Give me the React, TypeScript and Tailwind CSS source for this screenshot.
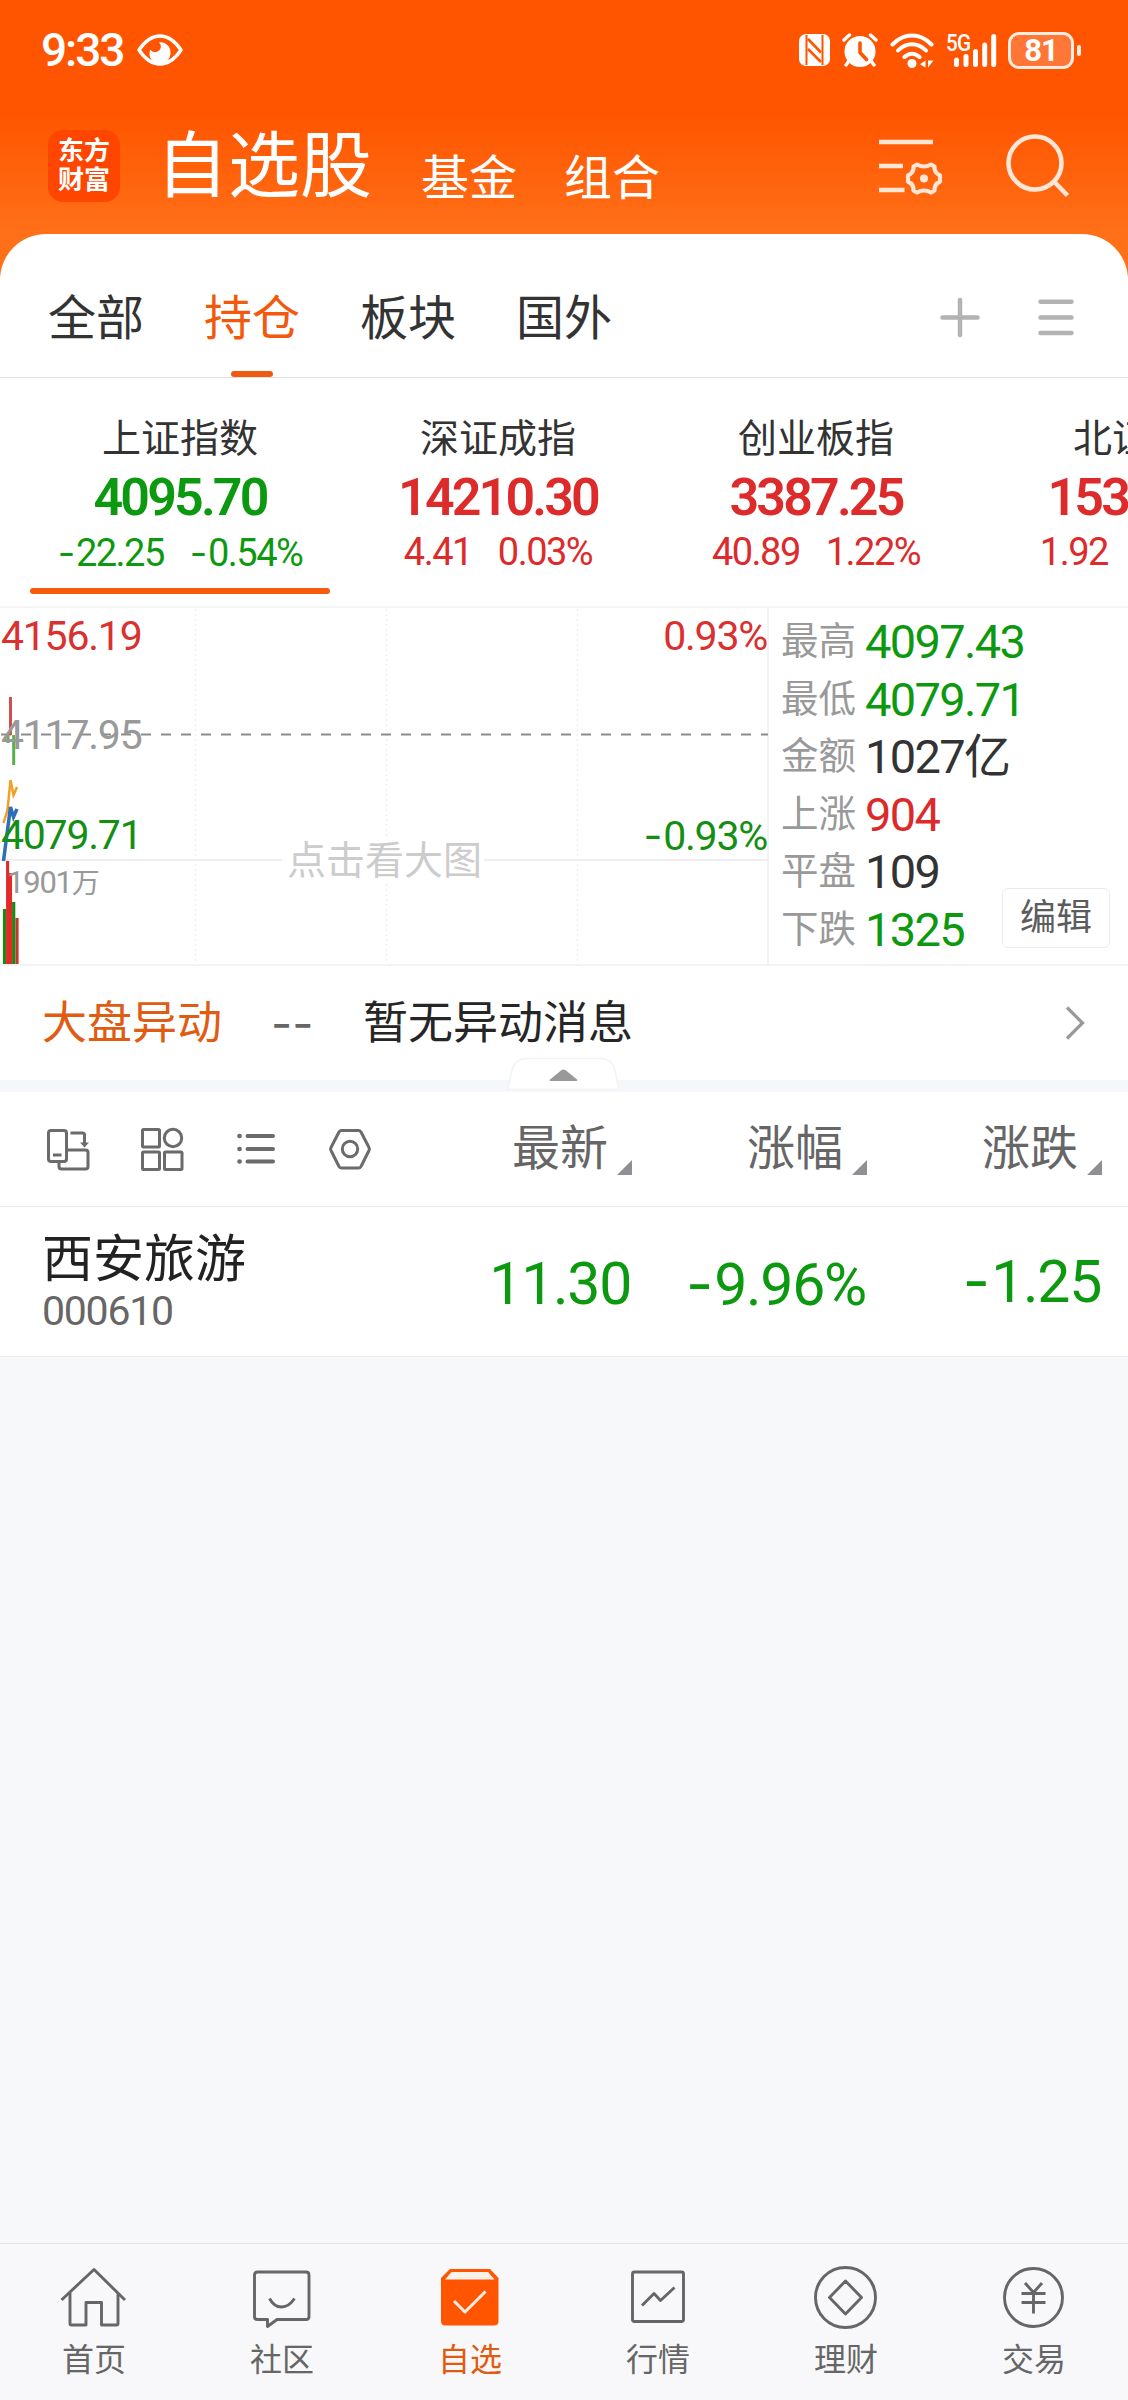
import type { ReactNode } from "react";

const topTabs = ["基金", "组合"];
const groups = ["全部", "持仓", "板块", "国外"];

const indices = [
    { name: "上证指数", value: "4095.70", change: "-22.25", percent: "-0.54%", down: true },
    { name: "深证成指", value: "14210.30", change: "4.41", percent: "0.03%", down: false },
    { name: "创业板指", value: "3387.25", change: "40.89", percent: "1.22%", down: false },
    { name: "北证50", value: "1530.12", change: "1.92", percent: "0.13%", down: false }
];

const stats = [
    { label: "最高", value: "4097.43", color: "text-[#0d990f]" },
    { label: "最低", value: "4079.71", color: "text-[#0d990f]" },
    { label: "金额", value: "1027亿", color: "text-[#333333]" },
    { label: "上涨", value: "904", color: "text-[#dc2a2a]" },
    { label: "平盘", value: "109", color: "text-[#333333]" },
    { label: "下跌", value: "1325", color: "text-[#0d990f]" }
];

const columns = ["最新", "涨幅", "涨跌"];

// Roboto's hyphen is too short for a minus sign
function Num({ children }: { children: string }) {
    if (!children.startsWith("-")) return <>{children}</>;
    return (
        <>
            <span className="font-[Inter] tracking-[0.02em]">-</span>
            {children.slice(1)}
        </>
    );
}

function StatusBar() {
    return (
        <div className="flex h-[100px] items-center pl-[41px] text-white">
            <span className="w-[96px] text-[46px] leading-none font-medium tracking-[-0.045em]">9:33</span>
            <svg width="46" height="32" viewBox="0 0 46 32" fill="none">
                <path d="M2 16C8 7 15 2 23 2s15 5 21 14c-6 9-13 14-21 14S8 25 2 16Z" stroke="#fff" strokeWidth="3.4" strokeLinejoin="round" />
                <path d="M22 8.5a10 10 0 0 1 11.5 10C33.500 26 28 30 23 30s-10.500-4-10.500-10c0-2 .5-3.500 1-4.500 2 3.500 6 3 8.500 1s2.500-5.500 0-8Z" fill="#fff" />
            </svg>
            <div className="ml-[616px] flex items-center">
                <svg width="31" height="32" viewBox="0 0 31 32">
                    <rect width="31" height="32" rx="7" fill="#fff" />
                    <path d="M7.500 1V31M23.500 1V31" stroke="#ff5500" strokeWidth="2" fill="none" />
                    <path d="M9 5L22 18.500M9 15L22 28" stroke="#ff5500" strokeWidth="2.600" />
                </svg>
                <svg className="ml-3" width="36" height="34" viewBox="0 0 36 34" fill="none" strokeLinecap="round">
                    <circle cx="18" cy="18.500" r="15.500" fill="#fff" />
                    <path d="M2 7L7.500 2M34 7l-5.500-5M7 28l-3 4M29 28l3 4" stroke="#fff" strokeWidth="3.400" />
                    <path d="M18 10v9.500l6.500 7" stroke="#ff5500" strokeWidth="3.600" strokeLinejoin="round" />
                </svg>
                <svg className="ml-3" width="46" height="35" viewBox="0 0 46 35" fill="none" stroke="#fff" strokeWidth="4" strokeLinecap="round">
                    <path d="M2.500 11.500C14-.5 30-.5 41.500 11.500M8 17.500c8-8.500 20-8.500 28 0M14.500 24c4.500-4.500 10.500-4.500 15 0" />
                    <circle cx="22" cy="30.500" r="4.500" fill="#fff" stroke="none" />
                    <path d="M35.500 27.500v7l-5.500-3.200ZM38 27.500v7l5.500-7Z" fill="#fff" stroke="none" />
                </svg>
                <div className="relative ml-[10px] h-[35px] w-[51px]">
                    <span className="absolute -top-px left-0 origin-left scale-x-90 text-[23px] leading-none font-medium tracking-[-0.04em]">5G</span>
                    <svg width="51" height="35" viewBox="0 0 51 35" stroke="#fff" strokeWidth="5" strokeLinecap="round">
                        <path d="M10.500 27v4.500M20 23.500v8M29.500 18.500v13M38.700 12v19.500M47.700 3.500v28" />
                    </svg>
                </div>
                <div className="ml-[11px] flex h-[37px] w-[66px] items-center justify-center rounded-[11px] border-[3px] border-[#ffede2] bg-[#ff7636] text-[31px] leading-none font-bold tracking-[-0.03em]">
                    81
                </div>
                <div className="ml-[3px] h-[11px] w-[4px] rounded-sm bg-[#ffede2]" />
            </div>
        </div>
    );
}

function Header() {
    return (
        <header className="flex h-[134px] text-white">
            <div className="mt-[30px] ml-[48px] grid size-[72px] place-content-center rounded-[15px] bg-[#ff4600] text-[26px] leading-[29px] font-bold">
                <div>东方</div>
                <div>财富</div>
            </div>
            <h1 className="mt-[31px] ml-[36px] text-[72px] leading-none">自选股</h1>
            <nav className="mt-[55px] ml-[49px] flex gap-[47px] text-[48px] leading-none">
                {topTabs.map(t => <span key={t}>{t}</span>)}
            </nav>
            <svg className="mt-[36px] ml-[219px]" width="66" height="62" viewBox="0 0 66 62" fill="none" stroke="#ffe6d6" strokeWidth="4.500">
                <path d="M0 6h54M0 30h24M0 54h25.500" />
                <path
                    d="M38 28.500Q45 32.500 52 28.500L55.500 30.500Q55 36.500 61 39.500V45.500Q55 48.500 55.500 54.500L52 56.500Q45 52.500 38 56.500L34.500 54.500Q35 48.500 29 45.500V39.500Q35 36.500 34.500 30.500Z"
                    strokeLinejoin="round"
                    strokeWidth="4.200"
                />
                <circle cx="45" cy="42.500" r="4" fill="#ffe6d6" stroke="none" />
            </svg>
            <svg className="mt-[34px] ml-[60px]" width="66" height="66" viewBox="0 0 66 66" fill="none" stroke="#ffe6d6" strokeWidth="4.600">
                <circle cx="30" cy="29" r="26.500" />
                <path d="M49 47.500L62.500 61.500" />
            </svg>
        </header>
    );
}

function GroupTabs() {
    return (
        <div className="flex h-[144px] border-b border-[#e3e3e3] pl-[48px]">
            <div className="flex gap-[60px] text-[48px] leading-none text-[#333333]">
                {groups.map(g => (
                    <div key={g} className={g === "持仓" ? "flex flex-col items-center text-[#f2590c]" : "flex flex-col items-center"}>
                        <span className="mt-[61px]">{g}</span>
                        {g === "持仓" && <i className="mt-[28px] h-[6px] w-[42px] rounded-full bg-[#ee5a10]" />}
                    </div>
                ))}
            </div>
            <svg className="mt-[62px] ml-[328px]" width="40" height="44" viewBox="0 0 40 44" stroke="#b3b3b3" strokeWidth="4.500" strokeLinecap="round">
                <path d="M2.500 21.500h35M20 4v35" />
            </svg>
            <svg className="mt-[62px] ml-[58px]" width="36" height="44" viewBox="0 0 36 44" stroke="#b3b3b3" strokeWidth="4.500" strokeLinecap="round">
                <path d="M2.500 5.800h31M2.500 21.500h31M2.500 37h31" />
            </svg>
        </div>
    );
}

function IndexStrip() {
    return (
        <div className="flex h-[230px] overflow-hidden border-b-2 border-[#f5f5f5] pl-[21px]">
            {indices.map((item, i) => (
                <div key={item.name} className="flex w-[318px] shrink-0 flex-col items-center leading-none">
                    <div className="mt-[42px] text-[39px] text-[#333333]">{item.name}</div>
                    <div className={item.down ? "text-[#0d990f]" : "text-[#dd2a2a]"}>
                        <div className="mt-[13px] text-center text-[52px] font-semibold tracking-[-0.055em]">{item.value}</div>
                        <div className="mt-[9px] flex justify-center gap-[26px] text-[38px] tracking-[-0.04em]">
                            <span><Num>{item.change}</Num></span>
                            <span><Num>{item.percent}</Num></span>
                        </div>
                    </div>
                    {i === 0 && <div className="mt-[16px] h-[6px] w-[300px] rounded-full bg-[#f65a0b]" />}
                </div>
            ))}
        </div>
    );
}

function MinuteChart() {
    return (
        <div className="relative h-[356px] w-[769px] border-r-2 border-[#f3f3f3]">
            <svg className="absolute inset-0" width="769" height="356" viewBox="0 608 769 356" fill="none">
                <path d="M195.500 609v354M386.500 609v354M577.500 609v354" stroke="#f0f0f0" strokeWidth="1.500" strokeDasharray="2 3" />
                <path d="M0 860H769" stroke="#efefef" strokeWidth="2" />
                <path d="M1 734.500H768" stroke="#8c8c8c" strokeWidth="2" strokeDasharray="10 10" />
                <rect x="282" y="836" width="202" height="48" fill="#fff" />
                <path d="M10.500 697v38M17 724v10" stroke="#cf4f4f" strokeWidth="3" />
                <path d="M13.700 735v30M8 735v8" stroke="#58b04a" strokeWidth="3" />
                <path d="M3.500 823L7.500 810 10.500 780 13.500 795 17 787" stroke="#f0a024" strokeWidth="2.500" />
                <path d="M3.500 861L7.500 830 10.500 807 13.500 817 17 809" stroke="#2f6fba" strokeWidth="3.500" />
                <path d="M4.500 909v56M13.700 902v63" stroke="#168a12" strokeWidth="3.200" />
                <path d="M7.600 861v104M10.500 873v92" stroke="#e32a2a" strokeWidth="3.100" />
                <path d="M17 918v47" stroke="#c0392b" strokeWidth="3.200" />
            </svg>
            <div className="relative flex h-full flex-col text-[41px] leading-none tracking-[-0.03em]">
                <div className="mt-[8px] flex justify-between pl-[1px] text-[#d93030]">
                    <span>4156.19</span>
                    <span>0.93%</span>
                </div>
                <div className="mt-[58px] pl-[1px] text-[#999999]">4117.95</div>
                <div className="mt-[59px] flex justify-between pl-[1px] text-[#148f14]">
                    <span>4079.71</span>
                    <span><Num>-0.93%</Num></span>
                </div>
                <div className="mt-[10px] flex items-start">
                    <span className="w-[281px] pl-[7px] text-[31px] leading-none text-[#999999]">1901<span className="text-[28px]">万</span></span>
                    <span className="-mt-[25px] ml-[6px] text-[39px] leading-none tracking-normal text-[#cccccc]">点击看大图</span>
                </div>
            </div>
        </div>
    );
}

function StatsPanel() {
    return (
        <div className="relative flex-1 pt-[5px] pl-[12px]">
            {stats.map(s => (
                <div key={s.label} className="flex h-[57.500px] items-center leading-none">
                    <span className="w-[84px] text-[37.500px] text-[#999999]">{s.label}</span>
                    <span className={s.color + " text-[47px] tracking-[-0.035em]"}>{s.value}</span>
                </div>
            ))}
            <button className="absolute top-[280px] right-[18px] h-[60px] w-[108px] rounded-md border border-[#ebebeb] bg-white text-[36px] leading-none text-[#5c5c5c]">
                编辑
            </button>
        </div>
    );
}

function NoticeBar() {
    return (
        <div className="relative h-[126px] border-b-12 border-[#f5f7fa]">
            <div className="flex h-[114px] items-center pr-[43px] pl-[42px] text-[45px] leading-none text-[#262626]">
                <span className="w-[229px] text-[#df5c12]">大盘异动</span>
                <span className="w-[92px] font-[Inter] text-[46px] tracking-normal text-[#666666]">--</span>
                <span>暂无异动消息</span>
                <svg className="ml-auto" width="20" height="36" viewBox="0 0 20 36" fill="none" stroke="#999" strokeWidth="3.200">
                    <path d="M2 2.500L17.500 18 2 33.500" />
                </svg>
            </div>
            <svg className="absolute top-[91px] left-[507px]" width="113" height="35" viewBox="0 0 113 35">
                <path d="M1 32.500L5 13Q8 1.500 20 1.500H93Q105 1.500 108 13L112 32.500Z" fill="#fff" stroke="#f1f3f5" strokeWidth="1.500" />
                <path d="M43.500 24Q42 24 43 22.500L54 13.500Q56.500 11.500 59 13.500L70 22.500Q71 24 69.500 24Z" fill="#999" />
            </svg>
        </div>
    );
}

function ToolIcon({ children }: { children: ReactNode }) {
    return (
        <svg width="48" height="48" viewBox="0 0 48 48" fill="none" stroke="#6b6b6b" strokeWidth="3" strokeLinejoin="round">
            {children}
        </svg>
    );
}

function Toolbar() {
    return (
        <div className="flex h-[115px] items-center border-b border-[#e8e8e8] pl-[44px]">
            <div className="flex w-[353px] gap-[46px]">
                <ToolIcon>
                    <rect x="4.500" y="5.500" width="18" height="31" rx="2.500" />
                    <path d="M9 30h8.500M26.500 8H38.500a2 2 0 0 1 2 2V19M15 37v4.500a2.500 2.500 0 0 0 2.500 2.500H41.500a2.500 2.500 0 0 0 2.500-2.500V27.500a2.500 2.500 0 0 0-2.500-2.500H23" />
                    <path d="M36 17.500h9l-4.500 5Z" fill="#6b6b6b" stroke="none" />
                </ToolIcon>
                <ToolIcon>
                    <rect x="4.500" y="4.500" width="17" height="17.500" rx="1" />
                    <circle cx="35" cy="13" r="8.700" />
                    <rect x="4.500" y="27" width="17" height="17.500" rx="1" />
                    <rect x="26.500" y="27" width="17.500" height="17.500" rx="1" />
                </ToolIcon>
                <ToolIcon>
                    <path d="M15.500 11H41M15.500 24H41M15.500 36.500H41" strokeWidth="4" strokeLinecap="round" />
                    <path d="M7.500 11h.1M7.500 24h.1M7.500 36.500h.1" strokeWidth="4.600" strokeLinecap="round" />
                </ToolIcon>
                <ToolIcon>
                    <path d="M15.500 5.500H32.500Q34 5.500 35 7L43 22.500Q44 24 43 25.500L35 41.500Q34 43 32.500 43H15.500Q14 43 13 41.500L5 25.500Q4 24 5 22.500L13 7Q14 5.500 15.500 5.500Z" />
                    <circle cx="24" cy="24" r="7.700" />
                </ToolIcon>
            </div>
            {columns.map(c => (
                <div key={c} className="flex w-[235px] items-center justify-end text-[48px] leading-none text-[#666666]">
                    <span className="-mt-[1px]">{c}</span>
                    <svg className="mt-[36px] ml-[9px]" width="15" height="15" viewBox="0 0 15 15">
                        <path d="M15 0V15H0Z" fill="#8f8f94" />
                    </svg>
                </div>
            ))}
        </div>
    );
}

function StockRow() {
    return (
        <div className="flex h-[150px] border-b border-[#ebedf0] pl-[42px] leading-none">
            <div className="w-[355px]">
                <div className="mt-[27px] text-[51px] text-[#222222]">西安旅游</div>
                <div className="mt-[6px] text-[41px] tracking-[-0.03em] text-[#666666]">000610</div>
            </div>
            <div className="flex text-right text-[59px] tracking-[-0.022em] text-[#0d990f]">
                <span className="mt-[47px] w-[234px]">11.30</span>
                <span className="mt-[47px] w-[235px]"><Num>-9.96%</Num></span>
                <span className="mt-[44px] w-[235px]"><Num>-1.25</Num></span>
            </div>
        </div>
    );
}

const navItems = [
    {
        label: "首页",
        icon: (
            <>
                <path d="M3.500 39L36 8.500 67 39" />
                <path d="M12 32V62.500Q12 64 13.500 64H28V41.500H43.500V64H58.500Q60 64 60 62.500V32" />
            </>
        )
    },
    {
        label: "社区",
        icon: (
            <>
                <path d="M11.500 11H60Q63 11 63 14V55.500Q63 58.500 60 58.500H31L21.500 65.500V58.500H11.500Q8.500 58.500 8.500 55.500V14Q8.500 11 11.500 11Z" />
                <path d="M23.500 37.500Q28 46 35.500 46T48.500 37.500" />
            </>
        )
    },
    {
        label: "自选",
        icon: (
            <>
                <path d="M7 17L16 8H56L64.500 17V60Q64.500 64.500 60 64.500H11.500Q7 64.500 7 60Z" fill="#ff5500" stroke="none" />
                <path d="M11 18.500L17.500 11H54L60.500 18.500Z" fill="#fdf1ea" stroke="none" />
                <path d="M20 40L31 51 51.500 30.500" stroke="#fff0e6" />
            </>
        )
    },
    {
        label: "行情",
        icon: (
            <>
                <rect x="10.500" y="11" width="51" height="49.500" rx="2" />
                <path d="M20 44.500L32 32.500 38.500 39.500 52.500 26.500" />
            </>
        )
    },
    {
        label: "理财",
        icon: (
            <>
                <circle cx="35.500" cy="36.500" r="30" />
                <path d="M35.500 20L51.500 36.500 35.500 53 19.500 36.500Z" />
            </>
        )
    },
    {
        label: "交易",
        icon: (
            <>
                <circle cx="35.500" cy="36.500" r="29" />
                <path d="M27 22L35.500 31.500 44 22M35.500 31.500V52.500M23.500 32.500H47.500M23.500 41.500H47.500" />
            </>
        )
    }
];

function BottomNav() {
    return (
        <nav className="mt-auto grid h-[157px] grid-cols-6 border-t border-[#e3e3e3] bg-[#f8f8fa]">
            {navItems.map(item => (
                <div key={item.label} className={item.label === "自选" ? "flex flex-col items-center text-[#e05a10]" : "flex flex-col items-center text-[#666666]"}>
                    <svg className="mt-[17px]" width="72" height="72" viewBox="0 0 72 72" fill="none" stroke="#666" strokeWidth="2.900" strokeLinejoin="round">
                        {item.icon}
                    </svg>
                    <span className="mt-[11px] text-[32px] leading-none">{item.label}</span>
                </div>
            ))}
        </nav>
    );
}

export default function App() {
    return (
        <div className="flex h-[2400px] w-[1128px] flex-col overflow-hidden bg-[#f6f8fa] font-[Roboto,'Noto_Sans_CJK_SC',sans-serif]">
            <div className="bg-[linear-gradient(#ff5500_0px,#ff5500_115px,#ff7018_234px,#ff7018_100%)]">
                <StatusBar />
                <Header />
                <div className="rounded-t-[46px] bg-white">
                    <GroupTabs />
                    <IndexStrip />
                </div>
            </div>
            <main className="bg-white">
                <div className="flex border-b-2 border-[#f3f3f3]">
                    <MinuteChart />
                    <StatsPanel />
                </div>
                <NoticeBar />
                <Toolbar />
                <StockRow />
            </main>
            <BottomNav />
        </div>
    );
}
